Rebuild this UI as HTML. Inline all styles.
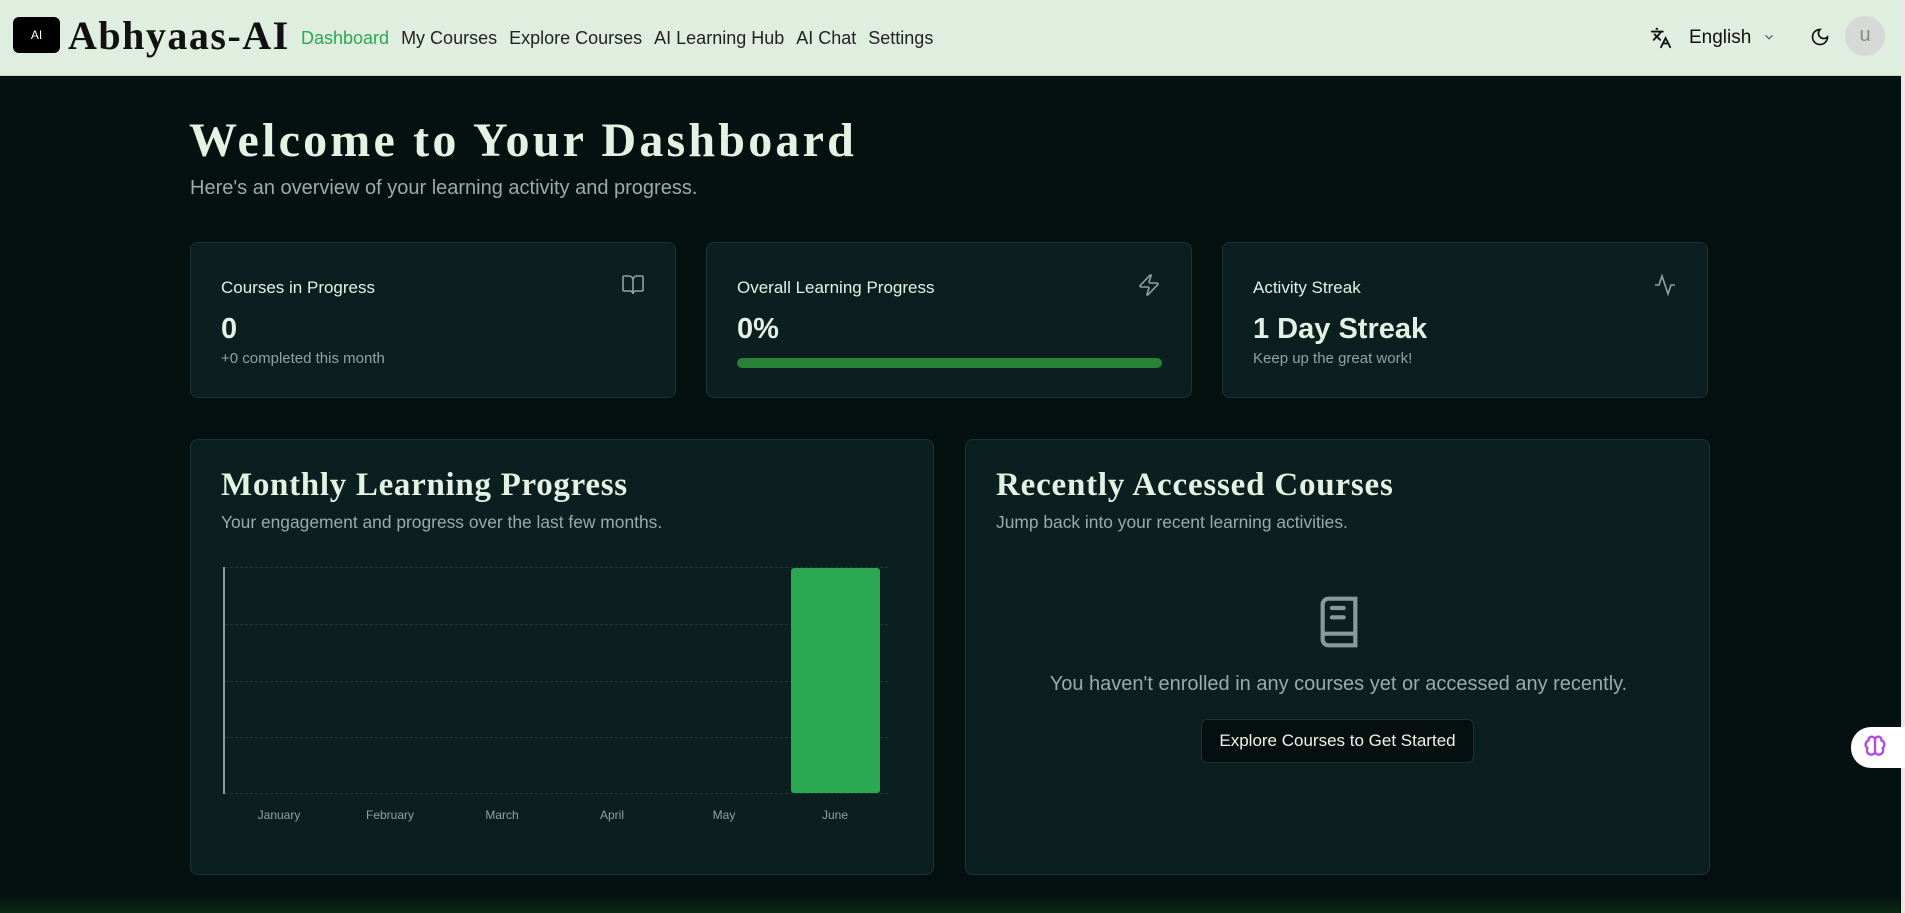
<!DOCTYPE html>
<html><head><meta charset="utf-8"><style>
*{box-sizing:border-box;margin:0;padding:0}
body{width:1905px;height:913px;overflow:hidden;background:#051110;font-family:"Liberation Sans",sans-serif;color:#e3f2e3;position:relative}
.hdr{position:absolute;left:0;top:0;width:1905px;height:76px;background:#e0eee0;border-bottom:1px solid #c8d8c8}
.logo{position:absolute;left:13px;top:17px;width:47px;height:36px;background:#000;border-radius:6px;color:#fff;font-size:12px;text-align:center;line-height:36px}
.brand{position:absolute;left:68px;top:12px;font-family:"Liberation Serif",serif;font-weight:bold;font-size:40px;color:#111;letter-spacing:1.5px}
.nav{position:absolute;left:301px;top:28px;font-size:18px;color:#222}
.nav span{margin-right:12px}
.serif{font-family:"Liberation Serif",serif;font-weight:bold}
.card{position:absolute;background:#0b1e20;border:1px solid #1c3435;border-radius:8px}
.ct{position:absolute;left:30px;top:35px;font-size:17px;color:#e3f2e3}
.cv{position:absolute;left:30px;top:70px;font-size:29px;font-weight:bold}
.cs{position:absolute;left:30px;top:107px;font-size:15px;color:#8fa3a3}
.ic{position:absolute;right:30px;top:30px}
.gl{position:absolute;left:225px;width:663px;border-top:1px dashed #1f3638}
.ml{position:absolute;top:808px;font-size:12px;color:#8fa3a3;width:80px;text-align:center}
</style></head><body>
<div class="hdr">
<div class="logo">AI</div>
<div class="brand">Abhyaas-AI</div>
<div class="nav"><span style="color:#2aa852">Dashboard</span><span>My Courses</span><span>Explore Courses</span><span>AI Learning Hub</span><span>AI Chat</span><span>Settings</span></div>
<svg style="position:absolute;left:1650px;top:27px" width="22" height="22" viewBox="0 0 24 24" fill="none" stroke="#111" stroke-width="2" stroke-linecap="round"><path d="m5 8 6 6M4 14l6-6 2-3M2 5h12M7 2h1M22 22l-5-10-5 10M14 18h6"/></svg>
<div style="position:absolute;left:1689px;top:27px;font-size:19px;color:#111">English</div>
<svg style="position:absolute;left:1762px;top:30px" width="14" height="14" viewBox="0 0 24 24" fill="none" stroke="#555" stroke-width="2"><path d="m6 9 6 6 6-6"/></svg>
<svg style="position:absolute;left:1810px;top:27px" width="20" height="20" viewBox="0 0 24 24" fill="none" stroke="#111" stroke-width="2"><path d="M12 3a6 6 0 0 0 9 9 9 9 0 1 1-9-9Z"/></svg>
<div style="position:absolute;left:1845px;top:16px;width:40px;height:40px;border-radius:50%;background:#d6d9d6;color:#888;font-size:20px;text-align:center;line-height:38px">u</div>
</div>
<div style="position:absolute;right:0;top:0;width:4px;height:913px;background:#e8e8e8"></div>
<div class="serif" style="position:absolute;left:189px;top:113px;font-size:48px;color:#e3f2e3;letter-spacing:3.2px">Welcome to Your Dashboard</div>
<div style="position:absolute;left:190px;top:177px;font-size:20px;color:#9aabab">Here's an overview of your learning activity and progress.</div>

<div class="card" style="left:190px;top:242px;width:486px;height:156px">
<div class="ct">Courses in Progress</div>
<svg class="ic" width="24" height="24" viewBox="0 0 24 24" fill="none" stroke="#8fa3a3" stroke-width="1.6"><path d="M12 7v14M3 18a1 1 0 0 1-1-1V4a1 1 0 0 1 1-1h5a4 4 0 0 1 4 4 4 4 0 0 1 4-4h5a1 1 0 0 1 1 1v13a1 1 0 0 1-1 1h-6a3 3 0 0 0-3 3 3 3 0 0 0-3-3z"/></svg>
<div class="cv">0</div><div class="cs">+0 completed this month</div></div>
<div class="card" style="left:706px;top:242px;width:486px;height:156px">
<div class="ct">Overall Learning Progress</div>
<svg class="ic" width="24" height="24" viewBox="0 0 24 24" fill="none" stroke="#8fa3a3" stroke-width="1.6"><path d="M4 14a1 1 0 0 1-.8-1.6l9.9-10.2a.5.5 0 0 1 .9.5l-1.9 6A1 1 0 0 0 13 10h7a1 1 0 0 1 .8 1.6l-9.9 10.2a.5.5 0 0 1-.9-.5l1.9-6A1 1 0 0 0 11 14z"/></svg>
<div class="cv">0%</div>
<div style="position:absolute;left:30px;top:115px;width:425px;height:10px;border-radius:5px;background:#268237"></div></div>
<div class="card" style="left:1222px;top:242px;width:486px;height:156px">
<div class="ct">Activity Streak</div>
<svg class="ic" width="24" height="24" viewBox="0 0 24 24" fill="none" stroke="#8fa3a3" stroke-width="1.6"><path d="M22 12h-4l-3 9L9 3l-3 9H2"/></svg>
<div class="cv">1 Day Streak</div><div class="cs">Keep up the great work!</div></div>

<div class="card" style="left:190px;top:439px;width:744px;height:436px">
<div class="serif" style="position:absolute;left:30px;top:27px;font-size:33px;letter-spacing:0.7px">Monthly Learning Progress</div>
<div style="position:absolute;left:30px;top:72px;font-size:17.4px;color:#9aabab">Your engagement and progress over the last few months.</div></div>
<div class="gl" style="top:567px"></div><div class="gl" style="top:624px"></div><div class="gl" style="top:681px"></div><div class="gl" style="top:737px"></div><div class="gl" style="top:793px"></div>
<div style="position:absolute;left:223px;top:567px;width:2px;height:227px;background:#8a9a9a"></div>
<div style="position:absolute;left:791px;top:568px;width:89px;height:225px;background:#2aa852;border-radius:3px"></div>
<div class="ml" style="left:239px">January</div><div class="ml" style="left:350px">February</div><div class="ml" style="left:462px">March</div><div class="ml" style="left:572px">April</div><div class="ml" style="left:684px">May</div><div class="ml" style="left:795px">June</div>

<div class="card" style="left:965px;top:439px;width:745px;height:436px">
<div class="serif" style="position:absolute;left:30px;top:27px;font-size:33px;letter-spacing:0.8px">Recently Accessed Courses</div>
<div style="position:absolute;left:30px;top:72px;font-size:17.4px;color:#9aabab">Jump back into your recent learning activities.</div>
<svg style="position:absolute;left:345px;top:152px" width="56" height="60" viewBox="0 0 24 24" fill="none" stroke="#8a9a9a" stroke-width="1.8" stroke-linecap="round"><path d="M5 19.5v-15A2.5 2.5 0 0 1 7.5 2H19v20H7.5A2.5 2.5 0 0 1 5 19.5ZM5 17h14M9 6h5M9 10h5"/></svg>
<div style="position:absolute;left:0;width:745px;top:233px;text-align:center;font-size:20px;color:#9aabab">You haven't enrolled in any courses yet or accessed any recently.</div>
<div style="position:absolute;left:235px;top:279px;width:273px;height:44px;background:#050f0f;border:1px solid #1c3435;border-radius:6px;font-size:17px;color:#f2f2e8;text-align:center;line-height:42px">Explore Courses to Get Started</div></div>

<div style="position:absolute;left:1851px;top:727px;width:54px;height:41px;background:#fff;border-radius:20px 0 0 20px"></div>
<svg style="position:absolute;left:1862px;top:734px" width="26" height="26" viewBox="0 0 24 24" fill="none" stroke="#b04ce0" stroke-width="2.2"><path d="M12 5a3 3 0 1 0-6 1 4 4 0 0 0-1 7 4 4 0 0 0 7 4zM12 5a3 3 0 1 1 6 1 4 4 0 0 1 1 7 4 4 0 0 1-7 4zM12 5v13"/></svg>
<div style="position:absolute;left:0;top:896px;width:1900px;height:17px;background:linear-gradient(#051110,#0c2a14)"></div>
</body></html>
